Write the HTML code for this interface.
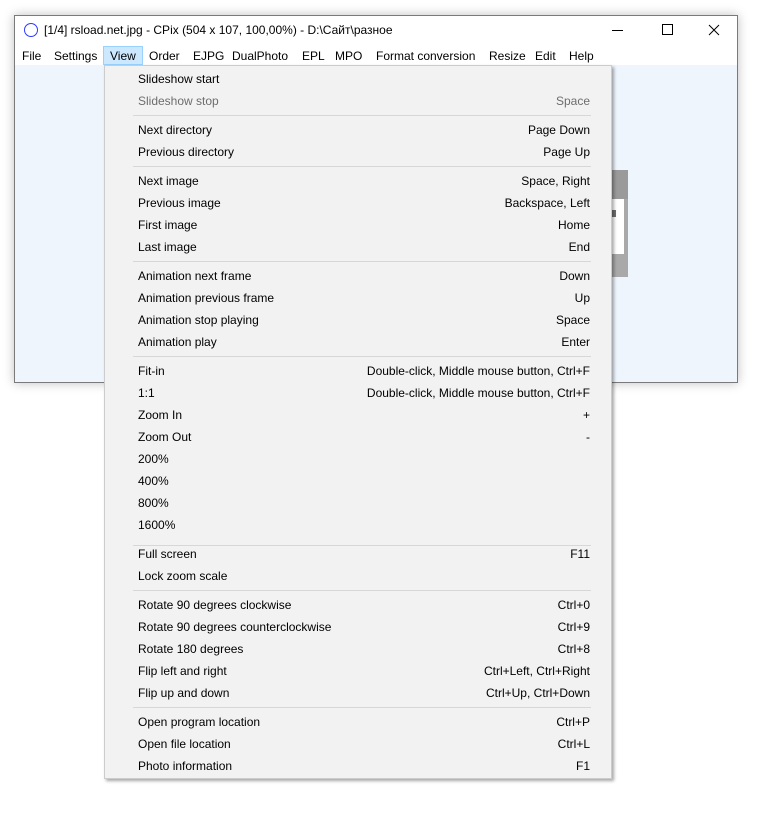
<!DOCTYPE html>
<html><head><meta charset="utf-8"><style>
*{margin:0;padding:0;box-sizing:border-box}
body{width:780px;height:813px;background:#fff;position:relative;overflow:hidden;font-family:"Liberation Sans","DejaVu Sans",sans-serif;font-size:12px;color:#000}
.win{position:absolute;left:14px;top:15px;width:724px;height:368px;border:1px solid #7a7a7a;background:#fff;box-shadow:0 0 10px rgba(0,0,0,.25)}
.title{position:absolute;left:28px;top:23px;font-size:12px;color:#000}
.circle{position:absolute;left:24px;top:23px;width:14px;height:14px;border:1.5px solid #2b3cff;border-radius:50%}
.mb{position:absolute;top:49px;font-size:12px}
.client{position:absolute;left:15px;top:65px;width:722px;height:317px;background:#eef5fd}
.menu{position:absolute;left:104px;top:65px;width:508px;height:714px;background:#f2f2f2;border:1px solid #ccc;box-shadow:2px 2px 3px rgba(0,0,0,.35)}
.it{position:absolute;left:138px;font-size:12px;line-height:14px;margin-top:1px}
.sc{position:absolute;right:190px;font-size:12px;line-height:14px;text-align:right;margin-top:1px}
.g{color:#6d6d6d}
.sep{position:absolute;left:133px;width:458px;height:1px;background:#d7d7d7}
</style></head><body>
<div class="win"></div>
<div class="client"></div>
<div style="position:absolute;left:540px;top:170px;width:88px;height:29px;background:#9a9a9a"></div>
<div style="position:absolute;left:540px;top:199px;width:85px;height:55px;background:#fff"></div>
<div style="position:absolute;left:624px;top:199px;width:4px;height:55px;background:#a9a9a9"></div>
<div style="position:absolute;left:610px;top:210px;width:6px;height:7px;background:#707070"></div>
<div style="position:absolute;left:540px;top:254px;width:88px;height:23px;background:#a9a9a9"></div>
<div class="circle"></div>
<div class="title" style="left:44px">[1/4] rsload.net.jpg - CPix (504 x 107, 100,00%) - D:\Сайт\разное</div>
<div style="position:absolute;left:612px;top:30px;width:11px;height:1px;background:#000"></div>
<div style="position:absolute;left:662px;top:24px;width:11px;height:11px;border:1px solid #000"></div>
<svg style="position:absolute;left:708px;top:24px" width="12" height="12"><path d="M1 1L11 11M11 1L1 11" stroke="#000" stroke-width="1"/></svg>
<div style="position:absolute;left:103px;top:46px;width:40px;height:19px;background:#cce8ff;border:1px solid #99d1ff"></div>
<div class="mb" style="left:22px">File</div>
<div class="mb" style="left:54px">Settings</div>
<div class="mb" style="left:110px">View</div>
<div class="mb" style="left:149px">Order</div>
<div class="mb" style="left:193px">EJPG</div>
<div class="mb" style="left:232px">DualPhoto</div>
<div class="mb" style="left:302px">EPL</div>
<div class="mb" style="left:335px">MPO</div>
<div class="mb" style="left:376px">Format conversion</div>
<div class="mb" style="left:489px">Resize</div>
<div class="mb" style="left:535px">Edit</div>
<div class="mb" style="left:569px">Help</div>
<div class="menu"></div>
<div class="it" style="top:71px">Slideshow start</div>
<div class="it g" style="top:93px">Slideshow stop</div><div class="sc g" style="top:93px">Space</div>
<div class="sep" style="top:115px"></div>
<div class="it" style="top:122px">Next directory</div><div class="sc" style="top:122px">Page Down</div>
<div class="it" style="top:144px">Previous directory</div><div class="sc" style="top:144px">Page Up</div>
<div class="sep" style="top:166px"></div>
<div class="it" style="top:173px">Next image</div><div class="sc" style="top:173px">Space, Right</div>
<div class="it" style="top:195px">Previous image</div><div class="sc" style="top:195px">Backspace, Left</div>
<div class="it" style="top:217px">First image</div><div class="sc" style="top:217px">Home</div>
<div class="it" style="top:239px">Last image</div><div class="sc" style="top:239px">End</div>
<div class="sep" style="top:261px"></div>
<div class="it" style="top:268px">Animation next frame</div><div class="sc" style="top:268px">Down</div>
<div class="it" style="top:290px">Animation previous frame</div><div class="sc" style="top:290px">Up</div>
<div class="it" style="top:312px">Animation stop playing</div><div class="sc" style="top:312px">Space</div>
<div class="it" style="top:334px">Animation play</div><div class="sc" style="top:334px">Enter</div>
<div class="sep" style="top:356px"></div>
<div class="it" style="top:363px">Fit-in</div><div class="sc" style="top:363px">Double-click, Middle mouse button, Ctrl+F</div>
<div class="it" style="top:385px">1:1</div><div class="sc" style="top:385px">Double-click, Middle mouse button, Ctrl+F</div>
<div class="it" style="top:407px">Zoom In</div><div class="sc" style="top:407px">+</div>
<div class="it" style="top:429px">Zoom Out</div><div class="sc" style="top:429px">-</div>
<div class="it" style="top:451px">200%</div>
<div class="it" style="top:473px">400%</div>
<div class="it" style="top:495px">800%</div>
<div class="it" style="top:517px">1600%</div>
<div class="sep" style="top:545px"></div>
<div class="it" style="top:546px">Full screen</div><div class="sc" style="top:546px">F11</div>
<div class="it" style="top:568px">Lock zoom scale</div>
<div class="sep" style="top:590px"></div>
<div class="it" style="top:597px">Rotate 90 degrees clockwise</div><div class="sc" style="top:597px">Ctrl+0</div>
<div class="it" style="top:619px">Rotate 90 degrees counterclockwise</div><div class="sc" style="top:619px">Ctrl+9</div>
<div class="it" style="top:641px">Rotate 180 degrees</div><div class="sc" style="top:641px">Ctrl+8</div>
<div class="it" style="top:663px">Flip left and right</div><div class="sc" style="top:663px">Ctrl+Left, Ctrl+Right</div>
<div class="it" style="top:685px">Flip up and down</div><div class="sc" style="top:685px">Ctrl+Up, Ctrl+Down</div>
<div class="sep" style="top:707px"></div>
<div class="it" style="top:714px">Open program location</div><div class="sc" style="top:714px">Ctrl+P</div>
<div class="it" style="top:736px">Open file location</div><div class="sc" style="top:736px">Ctrl+L</div>
<div class="it" style="top:758px">Photo information</div><div class="sc" style="top:758px">F1</div>
</body></html>
